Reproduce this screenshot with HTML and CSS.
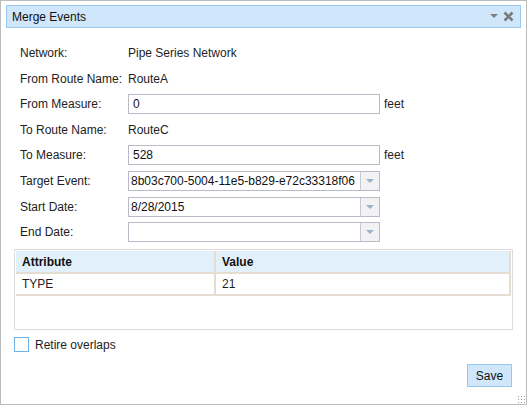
FILE: index.html
```html
<!DOCTYPE html>
<html>
<head>
    <title>Merge Events</title>
    <link rel="stylesheet" href="styles.css">
</head>
<body>
    <div class="ventana">
        <div class="barraTitulo">
            <span>Merge Events</span>
            <span class="iconos">
                <svg width="8" height="5" viewBox="0 0 8 5"><path d="M0 0 L8 0 L4 4 Z" fill="#808080"/></svg>
                <svg width="11" height="11" viewBox="0 0 11 11"><path d="M1.5 1.5 L9.5 9.5 M9.5 1.5 L1.5 9.5" stroke="#7a7a7a" stroke-width="2.6"/></svg>
            </span>
        </div>

        <div class="formulario">
            <label>Network:</label>
            <div class="valor">Pipe Series Network</div>

            <label>From Route Name:</label>
            <div class="valor">RouteA</div>

            <label>From Measure:</label>
            <div class="campo"><input type="text" value="0"><span class="unidad">feet</span></div>

            <label>To Route Name:</label>
            <div class="valor">RouteC</div>

            <label>To Measure:</label>
            <div class="campo"><input type="text" value="528"><span class="unidad">feet</span></div>

            <label>Target Event:</label>
            <div class="combo"><span class="texto">8b03c700-5004-11e5-b829-e72c33318f06</span><span class="flecha"></span></div>

            <label>Start Date:</label>
            <div class="combo"><span class="texto">8/28/2015</span><span class="flecha"></span></div>

            <label>End Date:</label>
            <div class="combo"><span class="texto"></span><span class="flecha"></span></div>
        </div>

        <div class="grilla">
            <table>
                <thead>
                    <tr><th class="col1">Attribute</th><th>Value</th></tr>
                </thead>
                <tbody>
                    <tr><td class="col1">TYPE</td><td>21</td></tr>
                </tbody>
            </table>
        </div>

        <div class="retirar">
            <span class="caja"></span>
            <span>Retire overlaps</span>
        </div>

        <div class="pie">
            <button class="btnGuardar">Save</button>
        </div>
        <div class="agarre"></div>
    </div>
</body>
</html>
```

FILE: styles.css
```css
* {
    box-sizing: border-box;
}

body {
    margin: 0;
    padding: 0;
    font-family: "Liberation Sans", Arial, sans-serif;
    font-size: 12px;
    color: #1e1e1e;
    background: #fff;
}

.ventana {
    position: relative;
    width: 527px;
    height: 405px;
    border: 1px solid #bcbcbc;
    padding: 4px 5px 0 5px;
}

.barraTitulo {
    height: 23px;
    background-color: #d0e6fa;
    border: 1px solid #9dcaef;
    display: flex;
    align-items: center;
    justify-content: space-between;
    padding: 0 6px 0 5px;
    font-size: 12px;
    color: #111;
}

.iconos {
    display: flex;
    align-items: center;
    gap: 5px;
}

.formulario {
    display: grid;
    grid-template-columns: 108px 252px auto;
    grid-auto-rows: 20px;
    row-gap: 5.6px;
    margin-top: 15px;
    padding-left: 14px;
    align-items: center;
}

.formulario label {
    grid-column: 1;
    color: #222;
}

.valor {
    grid-column: 2 / 4;
}

.campo {
    grid-column: 2 / 4;
    display: flex;
    align-items: center;
}

.campo input {
    width: 252px;
    height: 20px;
    border: 1px solid #b9bcc6;
    padding: 0 4px;
    font-family: inherit;
    font-size: 12px;
    color: #111;
    margin: 0;
}

.unidad {
    margin-left: 4px;
}

.combo {
    grid-column: 2;
    display: flex;
    height: 20px;
    border: 1px solid #b9bcc6;
}

.combo .texto {
    flex: 1;
    padding: 2px 0 0 2px;
    white-space: nowrap;
    overflow: hidden;
    color: #111;
}

.combo .flecha {
    width: 19px;
    border-left: 1px solid #c8cad2;
    background-color: #f2f2f4;
    position: relative;
}

.combo .flecha::after {
    content: "";
    position: absolute;
    left: 5px;
    top: 7px;
    border-left: 4px solid transparent;
    border-right: 4px solid transparent;
    border-top: 4px solid #9fb0c8;
}

.grilla {
    margin: 7px 8px 0 8px;
    height: 81px;
    border: 1px solid #dcdcdc;
    padding: 1px;
}

table {
    width: 100%;
    border-collapse: collapse;
}

th,
td {
    text-align: left;
    padding: 0 6px;
    border-right: 2px solid #e6ddd2;
    border-bottom: 2px solid #e6ddd2;
    height: 22px;
}

th {
    background-color: #e2f0fc;
    font-weight: bold;
    color: #111;
}

.col1 {
    width: 199px;
}

.retirar {
    display: flex;
    align-items: center;
    gap: 6px;
    margin: 7px 0 0 8px;
}

.caja {
    width: 15px;
    height: 15px;
    border: 1px solid #6eb2ea;
    background: #fff;
}

.pie {
    display: flex;
    justify-content: flex-end;
    margin-top: 12px;
    padding-right: 9px;
}

.btnGuardar {
    width: 45px;
    height: 23px;
    background-color: #cfe6fb;
    border: 1px solid #95c9f1;
    font-family: inherit;
    font-size: 12px;
    color: #111;
    padding: 0;
}

.agarre {
    position: absolute;
    right: 1px;
    bottom: 1px;
    width: 8px;
    height: 8px;
    background-image: radial-gradient(circle, #9a9a9a 0.8px, transparent 1px);
    background-size: 3px 3px;
}
```
